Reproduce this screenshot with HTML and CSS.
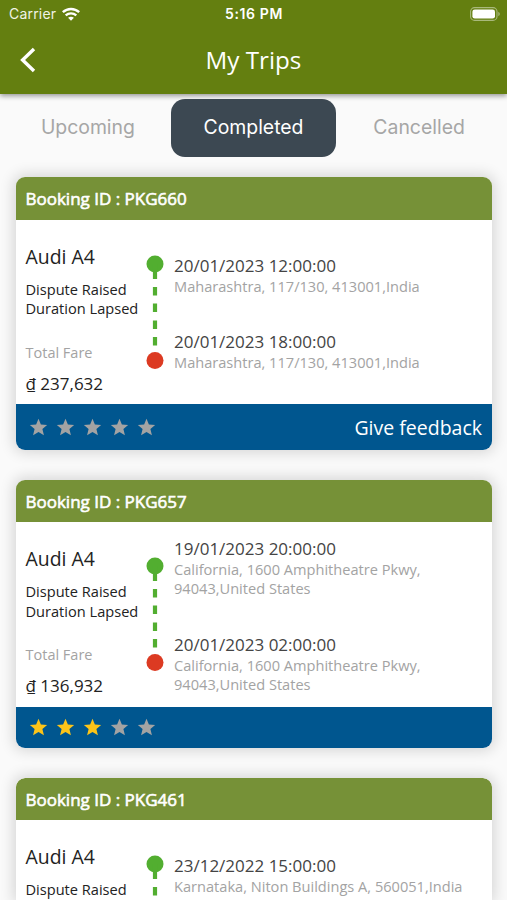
FILE: index.html
```html
<!DOCTYPE html>
<html lang="en">
<head>
    <meta charset="UTF-8">
    <meta name="viewport" content="width=device-width, initial-scale=1.0">
    <title>My Trips</title>
    <link rel="stylesheet" href="styles.css">
</head>
<body>
    <svg class="sprite" width="0" height="0">
        <symbol id="star" viewBox="0 0 20 20">
            <path d="M10 0.8l2.5 6.1 6.6.5-5 4.3 1.6 6.5-5.7-3.5-5.7 3.5 1.6-6.5-5-4.3 6.6-.5z" fill="currentColor"/>
        </symbol>
        <!-- pickup dot, dashed line, drop dot -->
        <symbol id="route" viewBox="0 0 18 115">
            <circle cx="9" cy="9" r="8.5" fill="#52ae30"/>
            <path d="M9 9v15M9 32v8.5M9 48.5v8.5M9 65.5v8.5M9 82v8.5" stroke="#52ae30" stroke-width="4.2"/>
            <circle cx="9" cy="105.5" r="8.5" fill="#dc3a22"/>
        </symbol>
    </svg>

    <div class="header">
        <div class="status-bar">
            <div class="carrier">
                <span>Carrier</span>
                <svg class="wifi" width="18" height="14" viewBox="0 0 18 14">
                    <path d="M.8 5.2C5.5.9 12.5.9 17.2 5.2" fill="none" stroke="#fff" stroke-width="2.5"/>
                    <path d="M3.7 8.4c3-2.8 7.6-2.8 10.6 0" fill="none" stroke="#fff" stroke-width="2.3"/>
                    <path d="M6.1 10.8c1.7-1.5 4.1-1.5 5.8 0L9 13.8z" fill="#fff"/>
                </svg>
            </div>
            <div class="time">5:16 PM</div>
            <svg class="battery" width="31" height="14" viewBox="0 0 31 14">
                <rect x="0.6" y="0.6" width="26.4" height="12.8" rx="4" fill="none" stroke="#a9b97c" stroke-width="1.1"/>
                <rect x="2.4" y="2.4" width="22.6" height="9.2" rx="2.4" fill="#fff"/>
                <path d="M28.3 4.8c2 .8 2 3.6 0 4.4z" fill="#a9b97c"/>
            </svg>
        </div>
        <div class="title-bar">
            <svg class="back" width="18" height="26" viewBox="0 0 18 26">
                <path d="M14 2L2.6 13 14 24" fill="none" stroke="#fff" stroke-width="3.4"/>
            </svg>
            <div class="title">My Trips</div>
        </div>
    </div>

    <div class="tabs">
        <div class="tab">Upcoming</div>
        <div class="tab active">Completed</div>
        <div class="tab">Cancelled</div>
    </div>

    <div class="trips">
        <div class="card">
            <div class="card-header">Booking ID : PKG660</div>
            <div class="card-body">
                <div class="info">
                    <div class="car">Audi A4</div>
                    <div class="status">Dispute Raised<br>Duration Lapsed</div>
                    <div class="fare-label">Total Fare</div>
                    <div class="fare">₫ 237,632</div>
                </div>
                <svg class="route"><use href="#route"/></svg>
                <div class="stops">
                    <div class="stop pickup">
                        <div class="date">20/01/2023 12:00:00</div>
                        <div class="address">Maharashtra, 117/130, 413001,India</div>
                    </div>
                    <div class="stop">
                        <div class="date">20/01/2023 18:00:00</div>
                        <div class="address">Maharashtra, 117/130, 413001,India</div>
                    </div>
                </div>
            </div>
            <div class="card-footer">
                <div class="stars">
                    <svg><use href="#star"/></svg>
                    <svg><use href="#star"/></svg>
                    <svg><use href="#star"/></svg>
                    <svg><use href="#star"/></svg>
                    <svg><use href="#star"/></svg>
                </div>
                <div class="feedback">Give feedback</div>
            </div>
        </div>

        <div class="card">
            <div class="card-header">Booking ID : PKG657</div>
            <div class="card-body">
                <div class="info">
                    <div class="car">Audi A4</div>
                    <div class="status">Dispute Raised<br>Duration Lapsed</div>
                    <div class="fare-label">Total Fare</div>
                    <div class="fare">₫ 136,932</div>
                </div>
                <svg class="route"><use href="#route"/></svg>
                <div class="stops">
                    <div class="stop pickup">
                        <div class="date">19/01/2023 20:00:00</div>
                        <div class="address">California, 1600 Amphitheatre Pkwy,<br>94043,United States</div>
                    </div>
                    <div class="stop">
                        <div class="date">20/01/2023 02:00:00</div>
                        <div class="address">California, 1600 Amphitheatre Pkwy,<br>94043,United States</div>
                    </div>
                </div>
            </div>
            <div class="card-footer rated">
                <div class="stars">
                    <svg class="filled"><use href="#star"/></svg>
                    <svg class="filled"><use href="#star"/></svg>
                    <svg class="filled"><use href="#star"/></svg>
                    <svg><use href="#star"/></svg>
                    <svg><use href="#star"/></svg>
                </div>
            </div>
        </div>

        <div class="card">
            <div class="card-header">Booking ID : PKG461</div>
            <div class="card-body">
                <div class="info">
                    <div class="car">Audi A4</div>
                    <div class="status">Dispute Raised</div>
                </div>
                <svg class="route"><use href="#route"/></svg>
                <div class="stops">
                    <div class="stop pickup">
                        <div class="date">23/12/2022 15:00:00</div>
                        <div class="address">Karnataka, Niton Buildings A, 560051,India</div>
                    </div>
                </div>
            </div>
        </div>
    </div>
</body>
</html>
```
FILE: styles.css
```css
* {
    box-sizing: border-box;
}
body {
    display: flex;
    flex-direction: column;
    font-family: "Open Sans", "Noto Sans", sans-serif;
    margin: 0;
    height: 100vh;
    overflow: hidden;
    background: #fafafa;
    color: #222;
}
svg {
    display: block;
    flex-shrink: 0;
}
.sprite {
    display: none;
}
.header {
    flex-shrink: 0;
    height: 93.5px;
    background: #647f10;
    color: #fff;
    box-shadow: 0 2px 5px rgba(0, 0, 0, 0.4);
}
.status-bar {
    display: grid;
    grid-template-columns: 1fr auto 1fr;
    align-items: center;
    height: 27px;
    padding: 0 6px 0 9px;
    font-family: Inter, sans-serif;
    font-size: 14px;
}
.carrier {
    display: flex;
    align-items: center;
    gap: 6px;
    color: #f0f3e6;
    letter-spacing: 0.2px;
}
.time {
    font-size: 14px;
    font-weight: 600;
    letter-spacing: 0.6px;
    margin-right: 2px;
}
.battery {
    justify-self: end;
}
.title-bar {
    display: grid;
    grid-template-columns: 18px 1fr 18px;
    align-items: center;
    height: 65px;
    padding: 0 20px;
}
.title {
    font-size: 24.2px;
    text-align: center;
}
.tabs {
    display: grid;
    flex-shrink: 0;
    grid-template-columns: repeat(3, 165.6px);
    justify-content: center;
    padding-top: 5px;
}
.tab {
    height: 58.5px;
    line-height: 56px;
    border-radius: 14px;
    font-family: Inter, sans-serif;
    font-size: 19.4px;
    text-align: center;
    color: #a6a6a6;
}
.tab.active {
    background: #3c4852;
    color: #fff;
}
.trips {
    display: flex;
    flex: 1;
    flex-direction: column;
    gap: 29.5px;
    min-height: 0;
    padding: 20px 15px 0 15.5px;
    overflow: hidden;
}
.card {
    flex-shrink: 0;
    border-radius: 9px;
    background: #fff;
    box-shadow: 0 0 14px 3px rgba(0, 0, 0, 0.14);
}
.card:last-child {
    flex: 1;
    min-height: 0;
    overflow: hidden;
    border-radius: 9px 9px 0 0;
}
.card-header {
    height: 42.5px;
    line-height: 43px;
    padding: 0 10px;
    border-radius: 9px 9px 0 0;
    background: #769137;
    color: #fff;
    font-size: 17px;
    -webkit-text-stroke: 0.6px #fff; /* slightly thicker than regular */
}
.card-body {
    display: flex;
    height: 184.5px;
    padding-left: 10px;
}
.info {
    width: 120px;
    padding-top: 23px;
    white-space: nowrap;
}
.car {
    font-size: 19.4px;
    line-height: 27px;
}
.status {
    margin-top: 10px;
    font-size: 14.6px;
    line-height: 19.5px;
}
.fare-label {
    margin-top: 24px;
    font-size: 14.5px;
    line-height: 20px;
    color: #a3a3a3;
}
.fare {
    margin-top: 9px;
    font-size: 17px;
    line-height: 24px;
}
.route {
    width: 18px;
    height: 115px;
    margin-top: 35px;
}
.stops {
    padding-left: 10.5px;
    white-space: nowrap;
}
.stop {
    color: #444;
}
.stop.pickup {
    display: flex;
    flex-direction: column;
    justify-content: flex-end;
    height: 76.5px;
    margin-bottom: 34px;
}
.date {
    font-size: 17px;
    line-height: 23px;
}
.address {
    font-size: 14.6px;
    line-height: 19.5px;
    color: #a3a3a3;
}
.card-footer {
    display: flex;
    justify-content: space-between;
    align-items: center;
    height: 46px;
    padding: 0 10px 0 13px;
    border-radius: 0 0 9px 9px;
    background: #00568f;
    color: #fff;
}
.card-footer.rated {
    height: 41.5px;
}
.stars {
    display: flex;
    gap: 8px;
    color: #a3a3a3;
}
.stars svg {
    width: 19px;
    height: 19px;
}
.stars .filled {
    color: #fcc419;
}
.feedback {
    font-size: 19.5px;
}
```
